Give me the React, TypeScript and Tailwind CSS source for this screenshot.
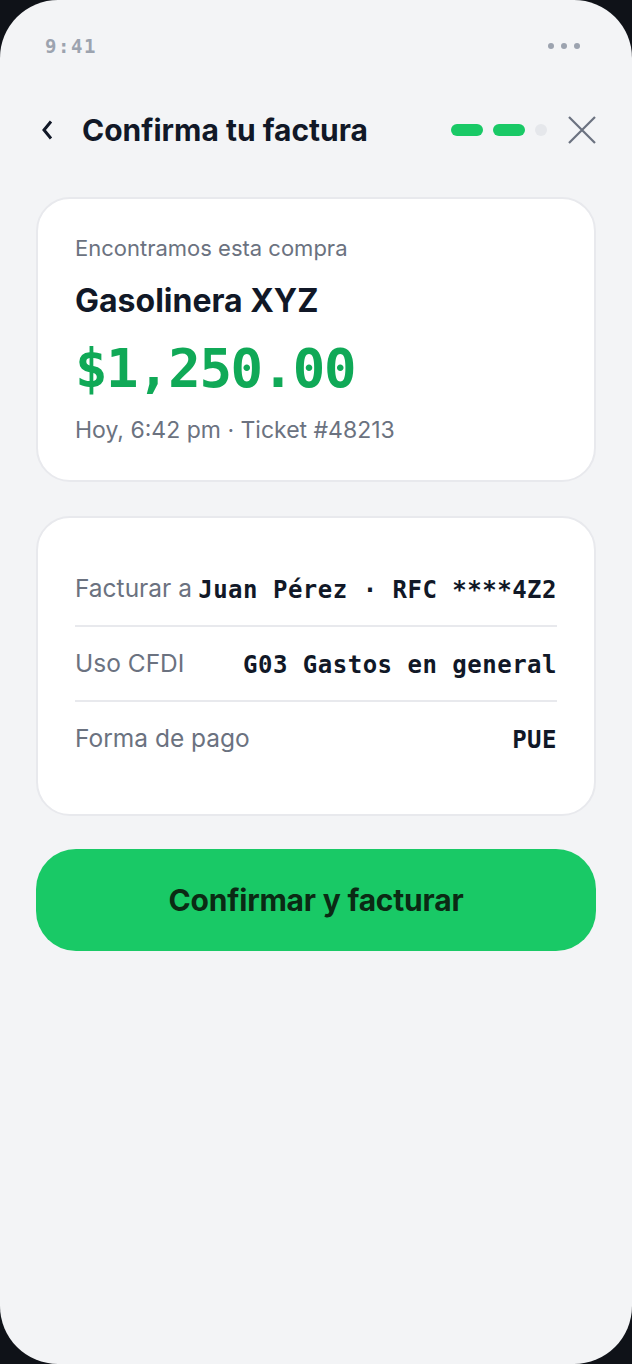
import React from "react";

const sans = { fontFamily: "Inter, 'Noto Sans', sans-serif" } as const;

export default function App() {
  return (
    <div className="w-[632px] h-[1364px] bg-[#0f1218]">
      <div
        className="w-full h-full bg-[#f3f4f6] rounded-[58px] overflow-hidden flex flex-col px-[36px]"
        style={sans}
      >
        {/* status bar */}
        <div className="flex items-center justify-between h-[28px] mt-[32px] pl-[9px] pr-[16px]">
          <span className="font-['DejaVu_Sans_Mono',monospace] text-[19px] leading-none font-bold text-[#9ca3af] tracking-[1.6px]">
            9:41
          </span>
          <div className="flex gap-[7px]">
            <span className="w-[6px] h-[6px] rounded-full bg-[#9ca3af]" />
            <span className="w-[6px] h-[6px] rounded-full bg-[#9ca3af]" />
            <span className="w-[6px] h-[6px] rounded-full bg-[#9ca3af]" />
          </div>
        </div>

        {/* header */}
        <div className="flex items-center h-[48px] mt-[46px]">
          <svg width="24" height="24" viewBox="0 0 24 24" fill="none">
            <path d="M15 3.5 L8 12 L15 20.5" stroke="#111827" strokeWidth="3" />
          </svg>
          <h1 className="ml-[22px] text-[30px] font-bold text-[#111827] leading-none">
            Confirma tu factura
          </h1>
          <div className="ml-auto flex items-center gap-[10px]">
            <span className="w-[32px] h-[12px] rounded-full bg-[#19c966]" />
            <span className="w-[32px] h-[12px] rounded-full bg-[#19c966]" />
            <span className="w-[12px] h-[12px] rounded-full bg-[#e5e7eb]" />
          </div>
          <svg width="28" height="28" viewBox="0 0 28 28" className="ml-[21px]" fill="none">
            <path d="M1 1 L27 27 M27 1 L1 27" stroke="#6b7280" strokeWidth="2.2" />
          </svg>
        </div>

        {/* card 1 */}
        <div className="mt-[43px] bg-white rounded-[34px] border-2 border-[#e8e9ed] px-[37px] pt-[35px] pb-[35px]">
          <div className="text-[22px] leading-[28px] text-[#6b7280]">Encontramos esta compra</div>
          <div className="mt-[19px] text-[32px] leading-[40px] font-bold text-[#111827]">
            Gasolinera XYZ
          </div>
          <div className="mt-[16px] font-['DejaVu_Sans_Mono',monospace] text-[54px] leading-[64px] font-bold text-[#10a957] tracking-[-1.4px]">
            $1,250.00
          </div>
          <div className="mt-[14px] text-[23px] leading-[30px] text-[#6b7280]">
            Hoy, 6:42 pm · Ticket #48213
          </div>
        </div>

        {/* card 2 */}
        <div className="mt-[34px] bg-white rounded-[34px] border-2 border-[#e8e9ed] px-[37px] pt-[34px] pb-[39px]">
          {[
            ["Facturar a", "Juan Pérez · RFC ****4Z2"],
            ["Uso CFDI", "G03 Gastos en general"],
            ["Forma de pago", "PUE"],
          ].map(([label, value], i) => (
            <div
              key={label}
              className={
                "flex items-center justify-between pt-[21px] pb-[22px] " +
                (i < 2 ? "border-b-2 border-[#e8e9ed]" : "")
              }
            >
              <span className="whitespace-nowrap text-[24.5px] leading-[30px] text-[#6b7280]">{label}</span>
              <span className="whitespace-nowrap font-['DejaVu_Sans_Mono',monospace] text-[24px] leading-[30px] font-bold text-[#111827] tracking-[0.5px] translate-y-[2px]">
                {value}
              </span>
            </div>
          ))}
        </div>

        {/* button */}
        <button className="mt-[33px] h-[102px] w-full rounded-[40px] bg-[#19c966] text-[#0b2a14] text-[30px] font-bold tracking-[-0.2px]">
          Confirmar y facturar
        </button>
      </div>
    </div>
  );
}
